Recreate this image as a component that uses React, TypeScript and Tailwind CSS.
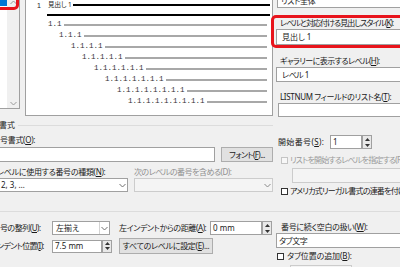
import React from "react";

const Chev = ({ up = false, color = "#707070" }: { up?: boolean; color?: string }) => (
  <svg width="7" height="5" viewBox="0 0 7 5">
    <path d={up ? "M0.5 4 L3.5 1 L6.5 4" : "M0.5 1 L3.5 4 L6.5 1"} fill="none" stroke={color} strokeWidth="1" />
  </svg>
);

const Spinner = () => (
  <div className="w-[10px] h-full flex flex-col border border-[#a0a0a0] bg-[#e8e8e8]">
    <div className="flex-1 flex items-center justify-center">
      <svg width="5" height="3" viewBox="0 0 5 3"><path d="M0 3 L2.5 0 L5 3Z" fill="#333" /></svg>
    </div>
    <div className="flex-1 flex items-center justify-center">
      <svg width="5" height="3" viewBox="0 0 5 3"><path d="M0 0 L2.5 3 L5 0Z" fill="#333" /></svg>
    </div>
  </div>
);

const Check = ({ disabled = false }: { disabled?: boolean }) => (
  <div className={disabled ? "w-[7px] h-[7px] border border-[#c4c4c4] bg-[#f7f7f7] shrink-0" : "w-[7px] h-[7px] border border-[#333333] bg-white shrink-0"} />
);

const U = ({ children }: { children: React.ReactNode }) => <span className="underline">{children}</span>;

const rows = [
  { cls: "pl-[22px]", t: "1.1" },
  { cls: "pl-[33px]", t: "1.1.1" },
  { cls: "pl-[45px]", t: "1.1.1.1" },
  { cls: "pl-[56px]", t: "1.1.1.1.1" },
  { cls: "pl-[68px]", t: "1.1.1.1.1.1" },
  { cls: "pl-[79px]", t: "1.1.1.1.1.1.1" },
  { cls: "pl-[91px]", t: "1.1.1.1.1.1.1.1" },
  { cls: "pl-[102px]", t: "1.1.1.1.1.1.1.1.1" },
];

export default function App() {
  return (
    <div className="w-[400px] h-[267px] overflow-hidden bg-[#f0f0f0] text-[#1a1a1a] text-[8px] leading-none font-['Noto_Sans','Noto_Sans_CJK_JP',sans-serif] [font-feature-settings:'palt'] whitespace-nowrap">
      <div className="flex h-[206px]">
        {/* left column */}
        <div className="w-[273px] shrink-0 flex flex-col">
          <div className="flex h-[116px]">
            {/* list box */}
            <div className="relative w-[20px] h-[109px] bg-white border-r border-b border-[#a0a0a0] flex">
              <div className="w-[7px]">
                <div className="h-[6px] bg-[#0078d7]" />
              </div>
              <div className="flex-1 bg-[#f0f0f0] flex flex-col items-center justify-between pb-[2px]">
                <Chev up color="#9a9a9a" />
                <Chev color="#9a9a9a" />
              </div>
              <div className="absolute left-[-9px] top-[-8px] w-[28px] h-[18px] border-[3px] border-[#e8141c] rounded-[5px]" />
            </div>
            {/* preview */}
            <div className="ml-[5px] w-[248px] h-[116px] bg-white border-x border-b border-[#a0a0a0] flex flex-col">
              <div className="h-[10px] flex items-center pl-[11px] pr-[2px]">
                <span className="text-[7px] font-['Liberation_Sans',sans-serif]">1</span>
                <span className="ml-[7px] text-[6.5px]">見出し 1</span>
                <div className="flex-1 h-[2px] bg-black ml-[1px]" />
              </div>
              <div className="h-[9px] flex items-center pl-[21px] pr-[2px]">
                <div className="flex-1 h-[2px] bg-black" />
              </div>
              {rows.map((r) => (
                <div key={r.t} className={`h-[11px] flex items-center pr-[5px] ${r.cls}`}>
                  <span className="text-[7.5px] font-['Liberation_Mono',monospace] text-[#333]">{r.t}</span>
                  <div className="flex-1 h-[2px] bg-[#a8a8a8] ml-[2px]" />
                </div>
              ))}
            </div>
          </div>
          <div className="h-[18px] flex items-center">
            <span className="-ml-[1px]">書式</span>
            <div className="flex-1 h-px bg-[#dcdcdc] ml-[3px]" />
          </div>
          <div className="h-[12px] flex items-center">
            <span className="tracking-[-0.3px]">号書式(<U>O</U>):</span>
          </div>
          <div className="mt-[1px] h-[15px] flex">
            <div className="w-[215px] h-full bg-white border border-l-0 border-[#a0a0a0]" />
            <div className="ml-[6px] flex-1 h-full bg-[#e1e1e1] border border-[#adadad] flex items-center justify-center">
              <span className="tracking-[-0.6px]">フォント(<U>F</U>)...</span>
            </div>
          </div>
          <div className="mt-[4px] h-[12px] flex items-center">
            <span className="w-[137px] -ml-[3px] tracking-[-0.3px]">レベルに使用する番号の種類(<U>N</U>):</span>
            <span className="text-[#8f8f8f] tracking-[-0.5px]">次のレベルの番号を含める(D):</span>
          </div>
          <div className="h-[14px] flex">
            <div className="w-[128px] h-full bg-white border border-l-0 border-[#a0a0a0] flex">
              <div className="flex-1 flex items-center pl-[1px]">2, 3, …</div>
              <div className="w-[10px] flex items-center justify-center">
                <Chev />
              </div>
            </div>
            <div className="ml-[6px] flex-1 h-full bg-[#f4f4f4] border border-[#cccccc] flex">
              <div className="flex-1" />
              <div className="w-[10px] flex items-center justify-center">
                <Chev color="#8a8a8a" />
              </div>
            </div>
          </div>
        </div>

        {/* right column */}
        <div className="flex-1 flex flex-col ml-[3px]">
          <div className="-mt-[6px] ml-[1px] h-[14px] bg-white border border-r-0 border-[#a0a0a0] flex items-center pl-[3px] tracking-[-0.3px]">リスト全体</div>
          <div className="mt-[7px] -ml-[5px] -mr-[10px] h-[33px] border-[3px] border-[#e8141c] rounded-[5px] flex flex-col">
            <div className="h-[10px] flex items-center pl-[6px]">
              <span className="tracking-[-0.95px]">レベルと対応付ける見出しスタイル(<U>K</U>):</span>
            </div>
            <div className="mt-[1px] ml-[2px] h-[16px] bg-white border border-r-0 border-[#a0a0a0] flex items-center pl-[5px]">見出し 1</div>
          </div>
          <div className="mt-[7px] h-[12px] flex items-center pl-[4px]">
            <span className="tracking-[-0.55px]">ギャラリーに表示するレベル(<U>H</U>):</span>
          </div>
          <div className="h-[15px] bg-white border border-r-0 border-[#a0a0a0] flex items-center pl-[5px] tracking-[-0.5px]">レベル 1</div>
          <div className="mt-[9px] h-[12px] flex items-center pl-[4px]">
            <span className="tracking-[-0.32px]">LISTNUM フィールドのリスト名(<U>T</U>):</span>
          </div>
          <div className="ml-[2px] h-[14px] bg-white border border-r-0 border-[#a0a0a0]" />
          <div className="mt-[18px] h-[14px] flex items-center pl-[2px]">
            <span className="w-[52px] tracking-[0.35px]">開始番号(<U>S</U>):</span>
            <div className="w-[32px] h-full bg-white border border-[#a0a0a0] flex items-center pl-[2px]">1</div>
            <Spinner />
          </div>
          <div className="mt-[5px] h-[12px] flex items-center pl-[5px] text-[#9a9a9a]">
            <Check disabled />
            <span className="ml-[2px] tracking-[-0.8px]">リストを開始するレベルを指定する(R)</span>
          </div>
          <div className="mt-[2px] ml-[16px] h-[15px] bg-[#f4f4f4] border border-r-0 border-[#cccccc]" />
          <div className="mt-[3px] h-[10px] flex items-center pl-[5px]">
            <Check />
            <span className="ml-[2px] tracking-[-0.8px]">アメリカ式リーガル書式の連番を付ける(<U>L</U>)</span>
          </div>
        </div>
      </div>

      <div className="h-px bg-[#dcdcdc] mt-[5px]" />

      <div className="flex">
        <div className="w-[273px] shrink-0 flex flex-col">
          <div className="mt-[9px] h-[14px] flex items-center">
            <span className="w-[52px] tracking-[-0.5px]">号の整列(<U>U</U>):</span>
            <div className="w-[58px] h-full bg-white border border-[#a0a0a0] flex">
              <div className="flex-1 flex items-center pl-[3px]">左揃え</div>
              <div className="w-[10px] border-l border-[#d4d4d4] flex items-center justify-center">
                <Chev />
              </div>
            </div>
            <span className="ml-[9px] w-[91px] tracking-[-0.4px]">左インデントからの距離(<U>A</U>):</span>
            <div className="w-[52px] h-full bg-white border border-[#a0a0a0] flex items-center pl-[2px]">0 mm</div>
            <Spinner />
          </div>
          <div className="mt-[3px] h-[16px] flex items-center">
            <span className="w-[55px] -ml-[3px] tracking-[-0.67px]">ンデント位置(<U>I</U>):</span>
            <div className="h-[13px] flex">
              <div className="w-[50px] h-full bg-white border border-[#a0a0a0] flex items-center pl-[2px]">7.5 mm</div>
              <Spinner />
            </div>
            <div className="ml-[7px] w-[94px] h-full bg-[#e1e1e1] border border-[#adadad] flex items-center justify-center">
              <span className="tracking-[-0.3px]">すべてのレベルに設定(<U>E</U>)...</span>
            </div>
          </div>
        </div>
        <div className="flex-1 flex flex-col ml-[3px]">
          <div className="mt-[9px] h-[12px] flex items-center pl-[5px]">
            <span className="tracking-[-0.3px]">番号に続く空白の扱い(<U>W</U>):</span>
          </div>
          <div className="h-[15px] bg-white border border-r-0 border-[#a0a0a0] flex items-center pl-[2px] tracking-[-0.4px]">タブ文字</div>
          <div className="mt-[2px] h-[12px] flex items-center pl-[1px]">
            <Check />
            <span className="ml-[3px] tracking-[-0.1px]">タブ位置の追加(<U>B</U>):</span>
          </div>
          <div className="mt-[3px] ml-[14px] w-[62px] h-[14px] bg-[#f4f4f4] border border-[#cccccc]" />
        </div>
      </div>
    </div>
  );
}
